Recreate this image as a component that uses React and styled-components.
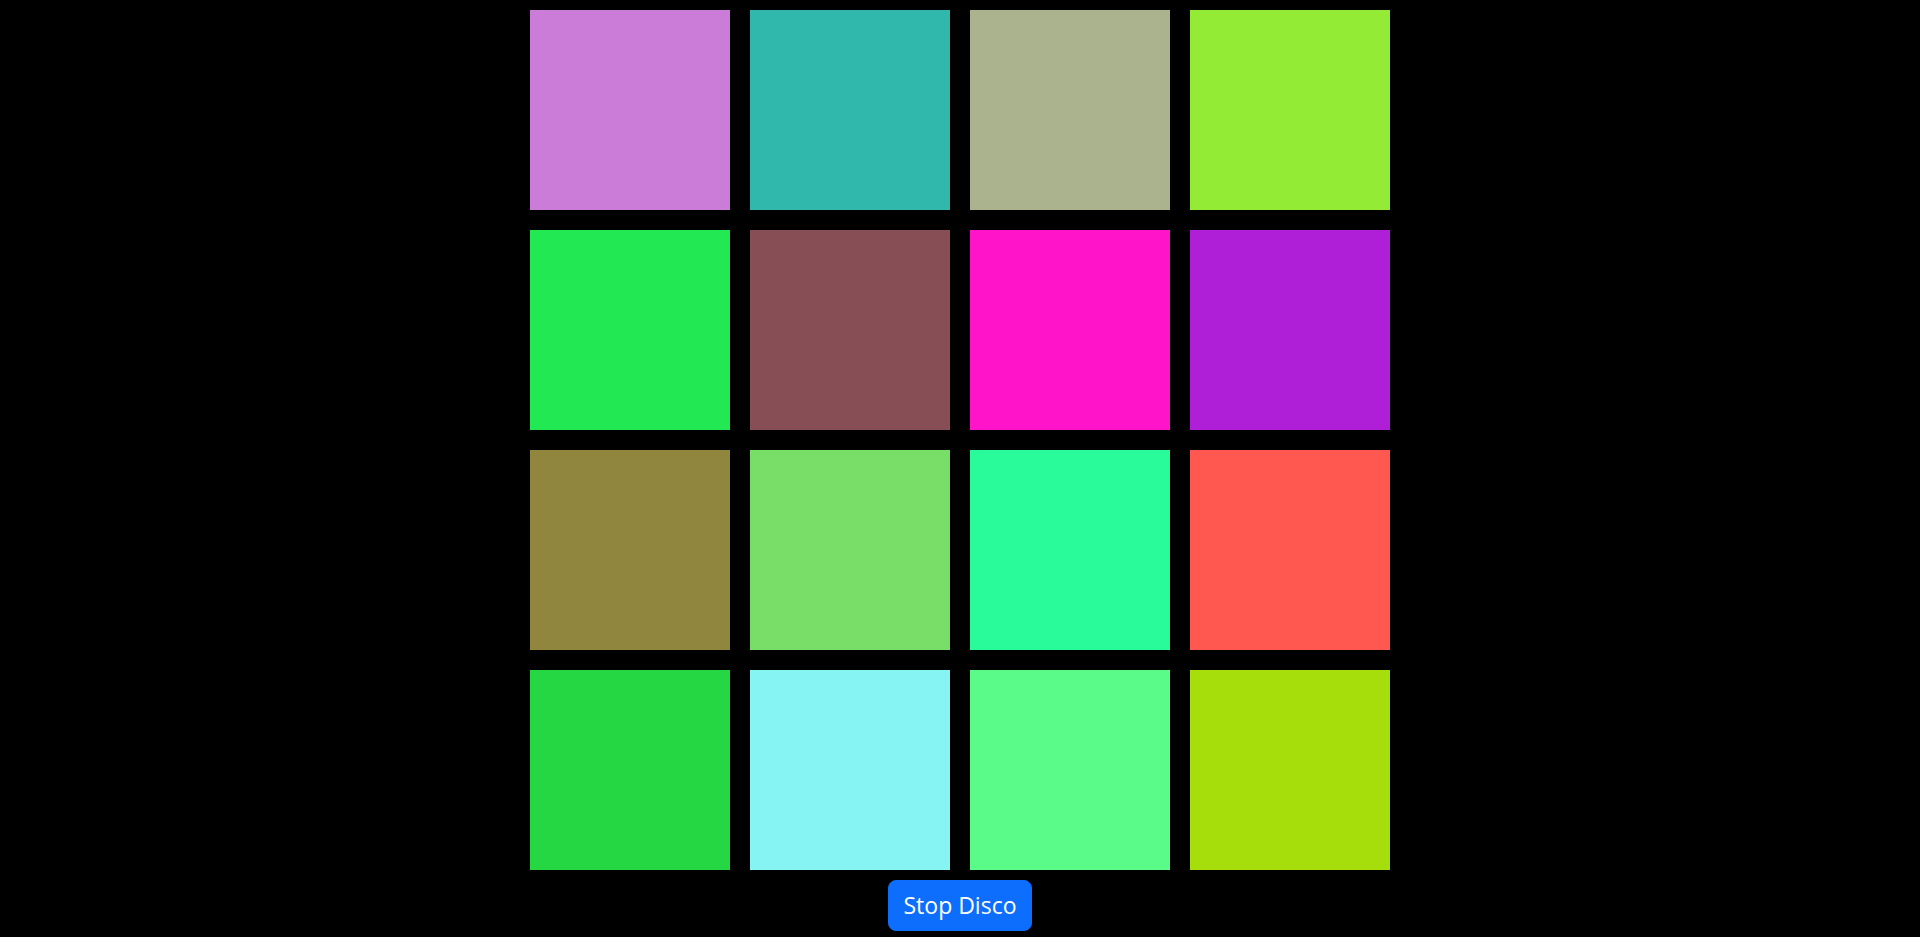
import React from "react";
import styled, { createGlobalStyle } from "styled-components";

const colors = [
  "#cb7cd8", "#31b8ac", "#aab28e", "#94eb36",
  "#21e853", "#874e55", "#ff14ca", "#ae1fd7",
  "#91863e", "#79de67", "#29fb9a", "#ff5850",
  "#25d743", "#87f4f4", "#5bfb8a", "#a6de0c",
];

const GlobalStyle = createGlobalStyle`
  body {
    margin: 0;
    background: #000;
    font-family: "Open Sans", "Noto Sans", sans-serif;
  }
`;

const Page = styled.div`
  min-height: 937px;
  background: #000;
  display: flex;
  flex-direction: column;
  align-items: center;
  padding-top: 10px;
  box-sizing: border-box;
`;

const Grid = styled.div`
  display: grid;
  grid-template-columns: repeat(4, 200px);
  gap: 20px;
`;

const Tile = styled.div`
  width: 200px;
  height: 200px;
  background: ${(p) => p.$color};
`;

const Button = styled.button`
  margin-top: 10px;
  width: 144px;
  height: 51px;
  padding: 0 12px;
  border: 1px solid #0d6efd;
  border-radius: 8px;
  background: #0d6efd;
  color: #fff;
  font-family: "Open Sans", "Noto Sans", sans-serif;
  font-size: 23px;
  line-height: 1.5;
  cursor: pointer;
`;

export default function App() {
  return (
    <>
      <GlobalStyle />
      <Page>
        <Grid>
          {colors.map((c, i) => (
            <Tile key={i} $color={c} />
          ))}
        </Grid>
        <Button>Stop Disco</Button>
      </Page>
    </>
  );
}
